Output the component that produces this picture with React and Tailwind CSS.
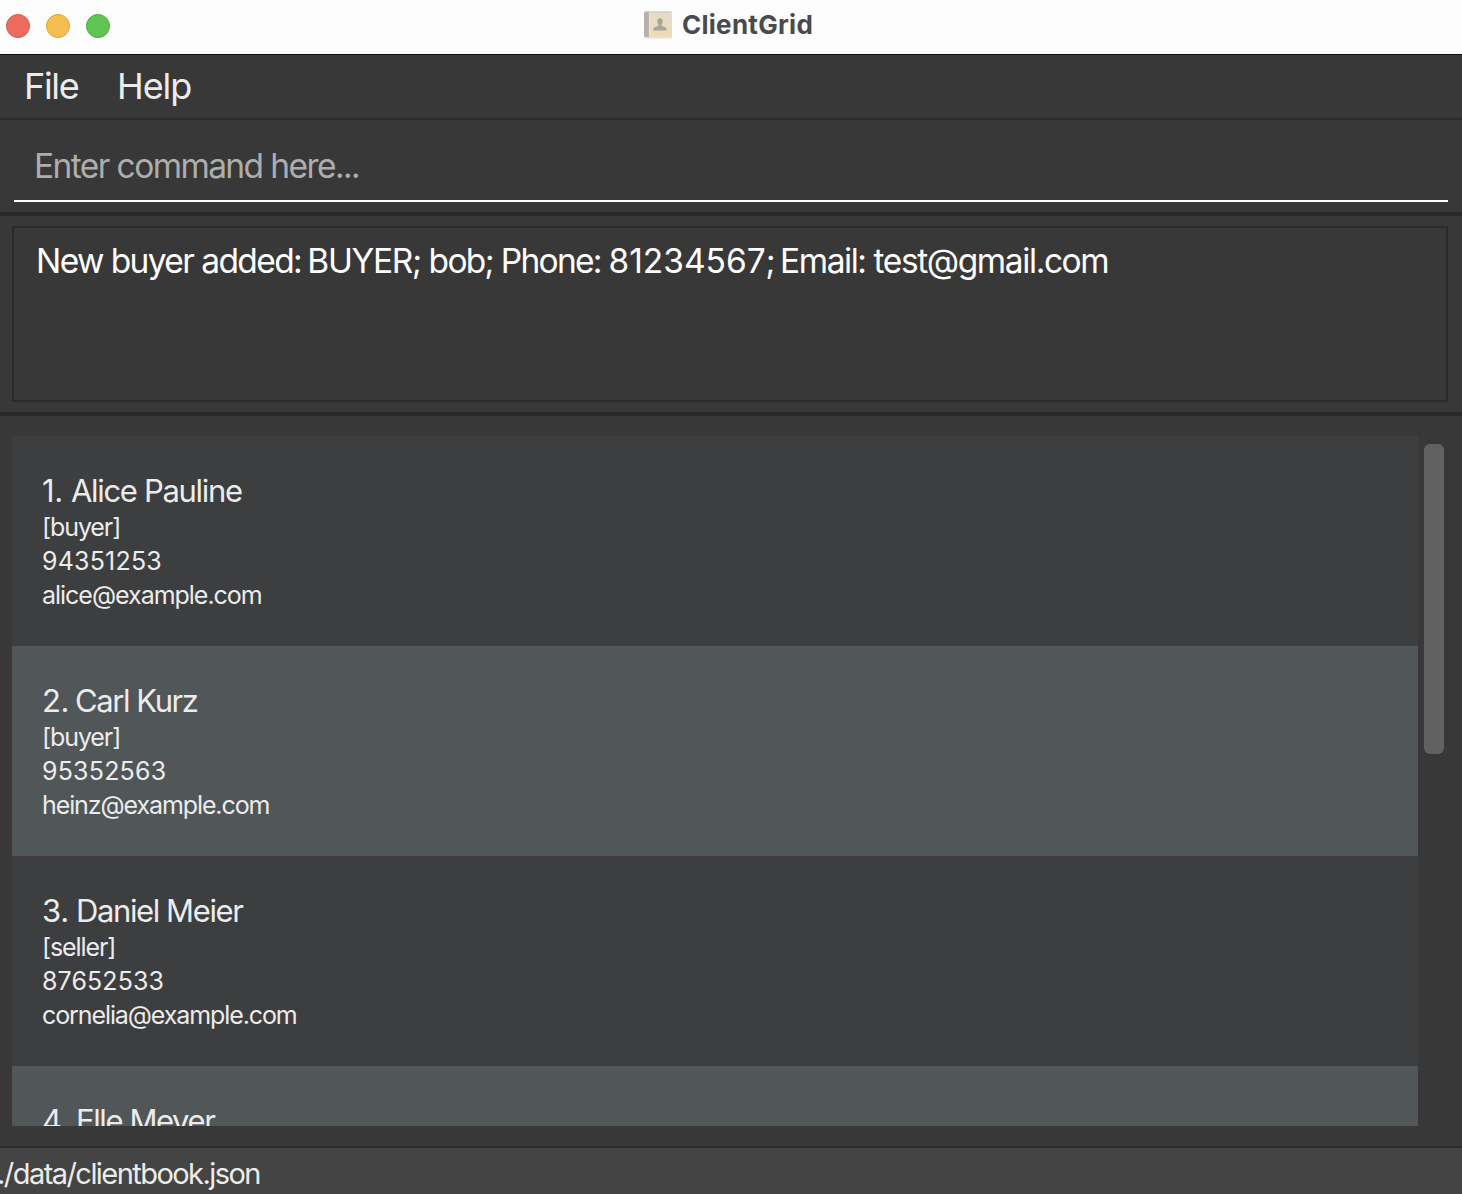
import React from "react";

const clients = [
  { id: 1, name: "Alice Pauline", role: "[buyer]", phone: "94351253", email: "alice@example.com", nameClass: "-ml-1 tracking-[-1.32px]", emailTrack: "tracking-[-1.02px]", phoneTrack: "tracking-[0.2px]" },
  { id: 2, name: "Carl Kurz", role: "[buyer]", phone: "95352563", email: "heinz@example.com", nameClass: "tracking-[-1.42px]", emailTrack: "tracking-[-1.1px]", phoneTrack: "tracking-[0.2px]" },
  { id: 3, name: "Daniel Meier", role: "[seller]", phone: "87652533", email: "cornelia@example.com", nameClass: "ml-px tracking-[-1.4px]", emailTrack: "tracking-[-1.1px]", phoneTrack: "tracking-[0.1px]" },
  { id: 4, name: "Elle Meyer", role: "[buyer]", phone: "9482224", email: "werner@example.com", nameClass: "ml-px tracking-[-1.4px]", emailTrack: "tracking-[-1.06px]", phoneTrack: "tracking-[0.17px]" },
];

function BookIcon() {
  return (
    <svg width="30" height="28" viewBox="0 0 30 28" className="shrink-0">
      <defs>
        <linearGradient id="cover" x1="0" y1="0" x2="0" y2="1">
          <stop offset="0" stopColor="#e3dbcb" />
          <stop offset="1" stopColor="#eddcb4" />
        </linearGradient>
      </defs>
      <rect x="1" y="1.6" width="28" height="26" rx="1.5" fill="#e2e2e2" />
      <rect x="1" y="0.5" width="28" height="25.5" rx="1.5" fill="url(#cover)" />
      <path d="M2.5 0.5H6V26H2.5A1.5 1.5 0 0 1 1 24.5V2A1.5 1.5 0 0 1 2.5 0.5Z" fill="#b5b0af" />
      <path d="M6.4 1V26" stroke="#efe6d5" strokeWidth="0.8" />
      <path d="M1.5 1H28.5" stroke="#c9c4bb" strokeWidth="0.8" />
      <path d="M17 7.2c1.8 0 2.8 1.3 2.7 3.2-.1 1.4-.6 2.3-1.200 3 0 1.300.3 1.700 1.700 2.200 2.300.8 3.500 1.400 3.700 3.900H10.100c.2-2.500 1.400-3.100 3.700-3.900 1.400-.5 1.700-.9 1.700-2.200-.6-.7-1.100-1.600-1.200-3-.1-1.900.9-3.200 2.700-3.200Z" fill="#aaa49a" />
    </svg>
  );
}

function ClientCard({ client }) {
  return (
    <li className="h-[210px] shrink-0 pl-[30px] pt-9 text-[25px] leading-[34px] text-[#ececec] odd:bg-[#3c3e3f] even:bg-[#515658]">
      <h2 className="flex h-[38px] text-[31px] leading-[38px]">
        <span className="w-[33px] whitespace-nowrap tracking-[-0.3px]">{client.id}.</span>
        <span className={client.nameClass}>{client.name}</span>
      </h2>
      <p className="tracking-[-1.1px]">{client.role}</p>
      <p className={client.phoneTrack}>{client.phone}</p>
      <p className={client.emailTrack}>{client.email}</p>
    </li>
  );
}

export default function App() {
  return (
    <div className="flex h-[1194px] w-[1462px] flex-col overflow-hidden bg-[#383838] font-['Inter',sans-serif]">
      <header className="grid h-[55px] shrink-0 grid-cols-[1fr_auto_1fr] items-center border-b border-[#101010] bg-[#fcfcfc]">
        <div className="flex gap-4 pb-0.5 pl-1.5">
          <span className="size-6 rounded-full border border-[#d8564b] bg-[#ec6b5f]" />
          <span className="size-6 rounded-full border border-[#d9a13c] bg-[#f5bf4f]" />
          <span className="size-6 rounded-full border border-[#4eab3c] bg-[#61c554]" />
        </div>
        <div className="flex items-center gap-[9px] pb-1 pr-1.5">
          <BookIcon />
          <h1 className="text-[26px] font-bold leading-8 tracking-[0.3px] text-[#4a4a4a]">ClientGrid</h1>
        </div>
      </header>

      <nav className="flex h-[65px] shrink-0 gap-10 border-b-2 border-[#2a2a2a] pl-6 text-[36px] leading-[63px] text-[#ececec]">
        <span className="w-[53px] tracking-[-1.3px]">File</span>
        <span className="tracking-[-1.1px]">Help</span>
      </nav>

      <section className="h-24 shrink-0 border-b-4 border-[#2a2a2a] px-3.5 pt-[13px]">
        <input
          placeholder="Enter command here..."
          className="block h-[69px] w-full border-b-2 border-white bg-transparent pb-0.5 pl-5 text-[33.5px] tracking-[-1.59px] outline-none placeholder:text-[#adadad]"
        />
      </section>

      <section className="h-[200px] shrink-0 border-b-4 border-[#2a2a2a] px-3 pt-2.5">
        <div className="mr-0.5 h-44 whitespace-pre border-2 border-[#2a2a2a] pl-[22px] pt-[13px] text-[33.5px] leading-10 tracking-[-1.59px] text-white">
          New buyer added:<span className="-ml-0.5 tracking-[-1.3px]"> BUYER;</span><span className="tracking-[-1.7px]"> bob; Phone: </span><span className="tracking-[-0.02px]">81234567</span>;<span className="-ml-0.5 tracking-[-1.45px]"> Email: </span><span className="tracking-[-1.4px]">test@gmail.com</span>
        </div>
      </section>

      <main className="flex h-[732px] shrink-0 gap-1.5 border-b-2 border-[#2a2a2a] pb-5 pl-3 pt-5">
        <ul className="flex w-[1406px] flex-col overflow-hidden">
          {clients.map((client) => <ClientCard key={client.id} client={client} />)}
        </ul>
        <div className="mt-2 h-[310px] w-5 rounded-md bg-[#616161]" />
      </main>

      <footer className="flex-1 whitespace-nowrap bg-[#444444] text-[29px] leading-[52px] tracking-[-1.55px] text-[#ececec]">
        <span className="-ml-[3px]">./data/clientbook.json</span>
      </footer>
    </div>
  );
}
